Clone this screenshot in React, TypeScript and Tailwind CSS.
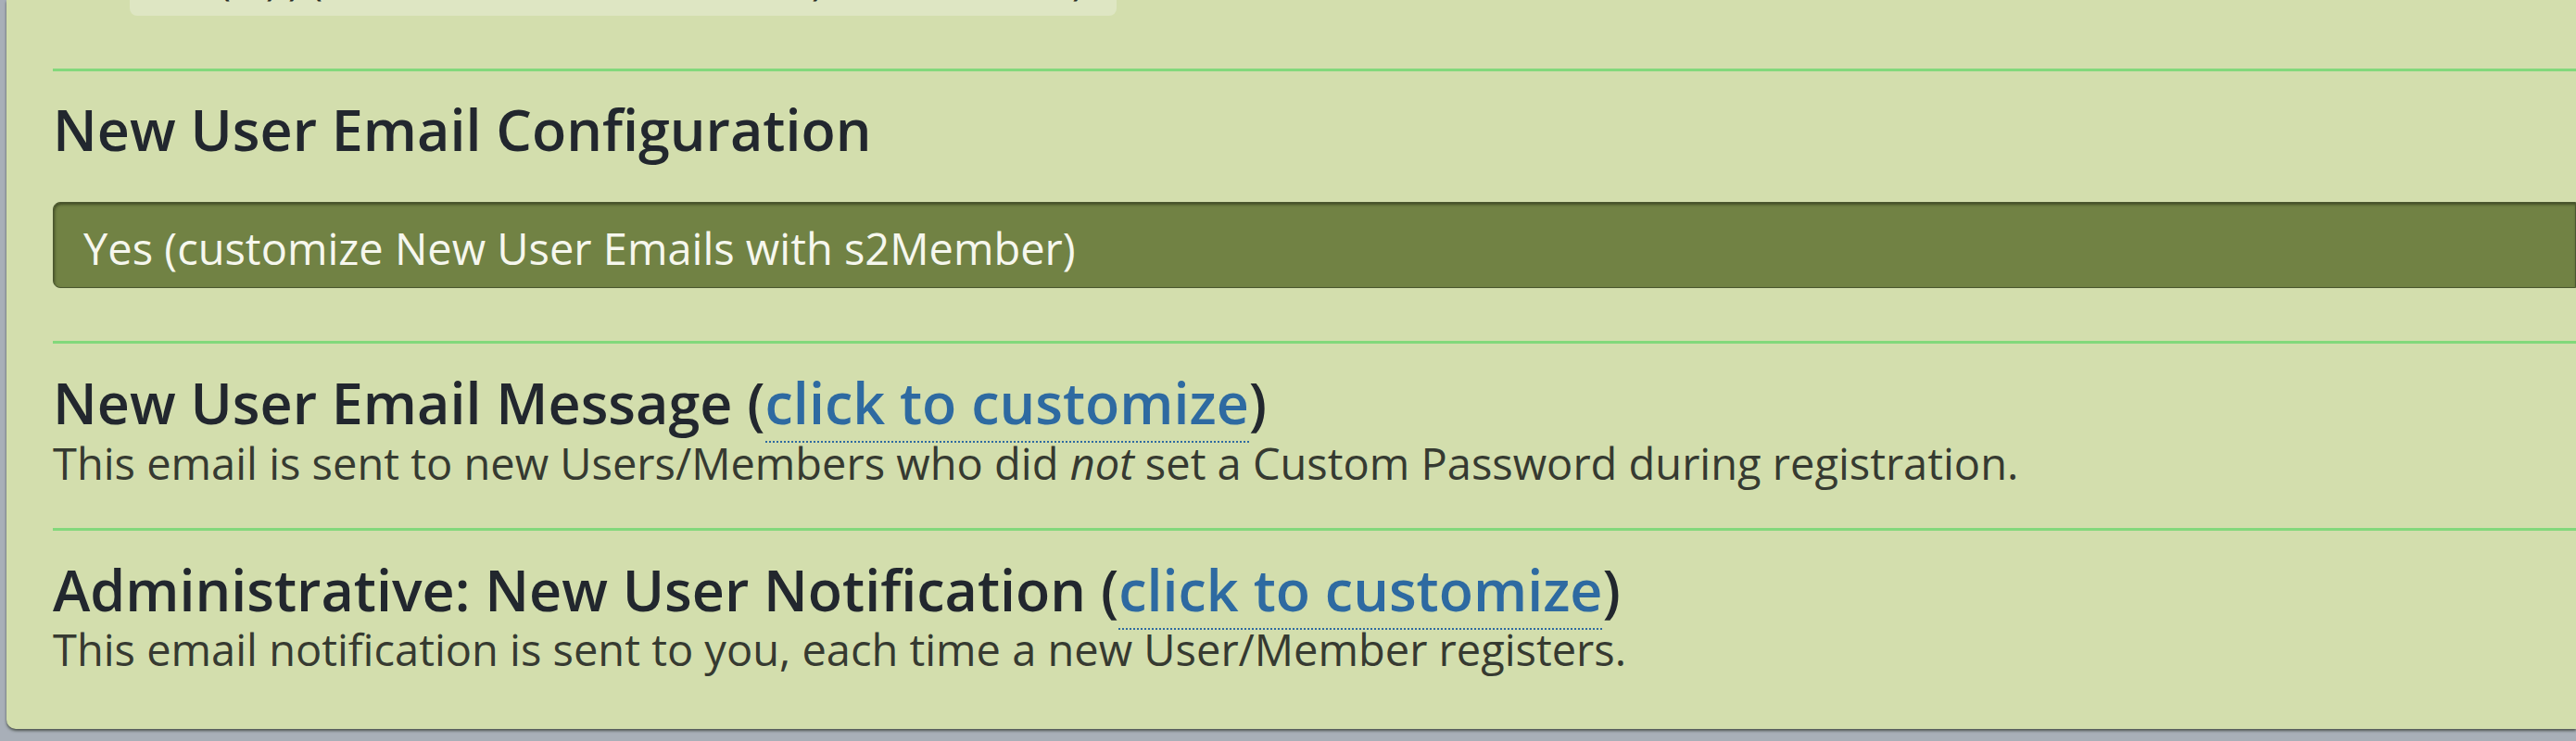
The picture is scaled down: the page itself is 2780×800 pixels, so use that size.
const sans = "font-['Open_Sans',_'Noto_Sans',_sans-serif]";

function Rule() {
  return <div className="h-[3px] bg-[#82d87b]" />;
}

function CustomizeLink() {
  return (
    <span className="cursor-pointer border-b-2 border-dotted border-[#2e6aa1] text-[#2e6aa1]">
      click to customize
    </span>
  );
}

export default function App() {
  return (
    <div className={`h-[800px] w-[2780px] overflow-hidden bg-[#a8afb8] pl-[7px] ${sans}`}>
      <div className="h-[787px] rounded-bl-[10px] bg-[#d3dead] pl-[50px] shadow-[0_2px_3px_rgba(40,45,35,0.7)]">
        {/* tail of the code box from the section above */}
        <div className="ml-[83px] h-[17px] w-[1065px] overflow-hidden rounded-b-[8px] bg-[#dee6c3]">
          <div className="-mt-[45px] flex text-[44px] leading-none text-[#2a2d26]">
            <span className="ml-[96px]">(</span>
            <span className="ml-[38px]">)</span>
            <span className="ml-[11px]">)</span>
            <span className="ml-[11px]">(</span>
            <span className="ml-[528px]">)</span>
            <span className="ml-[268px]">)</span>
          </div>
        </div>

        <div className="mt-[57px]">
          <Rule />
        </div>

        <h3 className="mt-[32px] text-[61px] font-semibold leading-none text-[#22272e]">
          New User Email Configuration
        </h3>

        <div className="mt-[48px] box-border h-[93px] rounded-l-[8px] border border-[#4b5730] bg-[#718244] pl-[32px] pt-[26px] text-[47px] leading-none text-[#f6f7ee] shadow-[inset_1px_2px_3px_rgba(30,35,15,0.55)]">
          Yes (customize New User Emails with s2Member)
        </div>

        <div className="mt-[57px]">
          <Rule />
        </div>

        <h3 className="mt-[33px] text-[61px] font-semibold leading-none text-[#22272e]">
          New User Email Message (<CustomizeLink />)
        </h3>
        <p className="mt-[12px] text-[47px] leading-none text-[#363a31]">
          This email is sent to new Users/Members who did <em>not</em> set a Custom Password during registration.
        </p>

        <div className="mt-[46px]">
          <Rule />
        </div>

        <h3 className="mt-[33px] text-[61px] font-semibold leading-none text-[#22272e]">
          Administrative: New User Notification (<CustomizeLink />)
        </h3>
        <p className="mt-[11px] text-[47px] leading-none text-[#363a31]">
          This email notification is sent to you, each time a new User/Member registers.
        </p>
      </div>
    </div>
  );
}
